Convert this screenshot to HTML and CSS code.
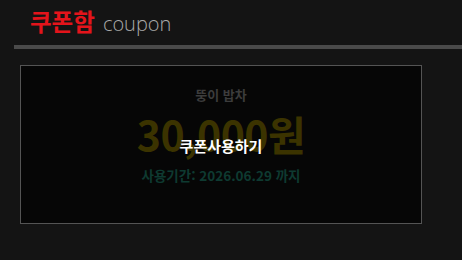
FILE: index.html
```html
<!DOCTYPE html>
<html lang="ko">
<head>
<meta charset="utf-8">
<link rel="stylesheet" href="styles.css">
</head>
<body>
<div class="page">
  <header class="head">
    <h1 class="title"><span class="ko">쿠폰함</span><span class="en">coupon</span></h1>
  </header>
  <div class="bar"></div>
  <section class="coupon">
    <div class="store">뚱이 밥차</div>
    <div class="amount">30,000원</div>
    <div class="period">사용기간: 2026.06.29 까지</div>
    <div class="overlay"><span class="use">쿠폰사용하기</span></div>
  </section>
</div>
</body>
</html>
```
FILE: styles.css
```css
html, body {
  margin: 0;
  padding: 0;
  background: #141414;
  width: 462px;
  height: 260px;
  overflow: hidden;
  font-family: "Noto Sans CJK KR", "Noto Sans", sans-serif;
}
.page {
  display: flex;
  flex-direction: column;
}
.head {
  padding: 6px 0 0 30px;
  height: 38px;
  box-sizing: border-box;
}
.title {
  margin: 0;
  display: flex;
  align-items: baseline;
  gap: 8px;
  line-height: 30px;
  font-weight: normal;
}
.ko {
  color: #e4141b;
  font-size: 23.5px;
  font-weight: 700;
}
.en {
  color: #a9a9a9;
  font-family: "Open Sans", sans-serif;
  font-weight: 300;
  font-size: 20px;
}
.bar {
  margin-left: 14px;
  height: 4px;
  background: #4a4a4a;
  margin-top: 7px;
}
.coupon {
  position: relative;
  margin: 16px 0 0 20px;
  width: 400px;
  height: 137px;
  border: 1px solid #545454;
  background: #060606;
  display: flex;
  flex-direction: column;
  align-items: center;
  padding-top: 20px;
  box-sizing: content-box;
}
.store {
  color: #3c3c3c;
  font-size: 13px;
  font-weight: 700;
  line-height: 18px;
}
.amount {
  color: #3b3300;
  font-size: 41px;
  font-weight: 700;
  line-height: 48px;
  margin-top: 5px;
  letter-spacing: -0.5px;
}
.period {
  color: #0e3a31;
  font-size: 13.5px;
  font-weight: 700;
  line-height: 20px;
  margin-top: 8px;
}
.overlay {
  position: absolute;
  inset: 0;
  display: flex;
  justify-content: center;
  padding-top: 69px;
}
.use {
  color: #ffffff;
  font-size: 15px;
  font-weight: 700;
  line-height: 22px;
  height: 22px;
}
```
